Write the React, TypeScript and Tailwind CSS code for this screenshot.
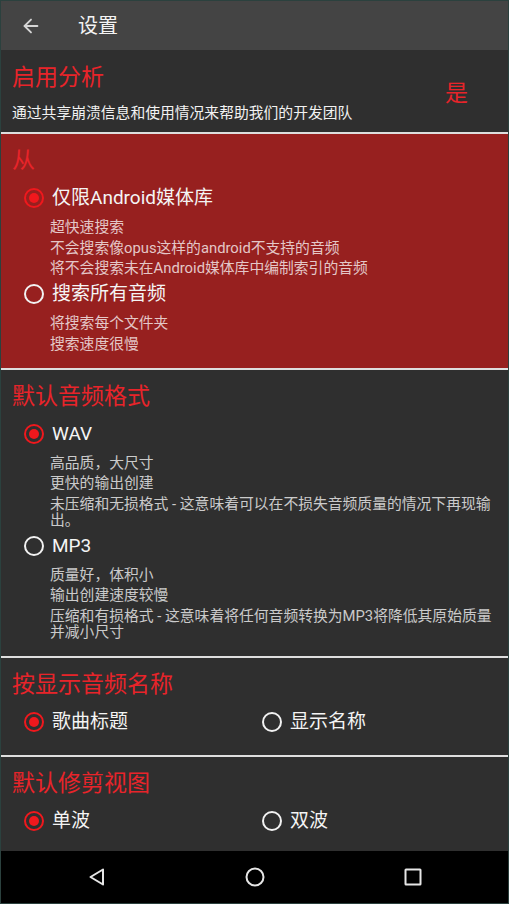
import { ArrowLeft } from 'lucide-react'

type Option = { label: string; checked: boolean; desc?: string[] }

const sourceOptions: Option[] = [
  {
    label: '仅限Android媒体库',
    checked: true,
    desc: ['超快速搜索', '不会搜索像opus这样的android不支持的音频', '将不会搜索未在Android媒体库中编制索引的音频'],
  },
  { label: '搜索所有音频', checked: false, desc: ['将搜索每个文件夹', '搜索速度很慢'] },
]

const formatOptions: Option[] = [
  {
    label: 'WAV',
    checked: true,
    desc: ['高品质，大尺寸', '更快的输出创建', '未压缩和无损格式 - 这意味着可以在不损失音频质量的情况下再现输出。'],
  },
  {
    label: 'MP3',
    checked: false,
    desc: ['质量好，体积小', '输出创建速度较慢', '压缩和有损格式 - 这意味着将任何音频转换为MP3将降低其原始质量并减小尺寸'],
  },
]

function Radio({ checked }: { checked: boolean }) {
  return (
    <span
      className={`flex h-5 w-5 shrink-0 items-center justify-center rounded-full border-2 ${
        checked ? 'border-[#f0181d]' : 'border-[#f2f2f2]'
      }`}
    >
      {checked && <span className="h-[10px] w-[10px] rounded-full bg-[#f0181d]" />}
    </span>
  )
}

function RadioRow({ label, checked }: { label: string; checked: boolean }) {
  return (
    <div className="flex h-[28px] items-center gap-2">
      <Radio checked={checked} />
      <span className="text-[19px] leading-[28px] text-[#f4f4f4]">{label}</span>
    </div>
  )
}

function Divider() {
  return <div className="h-[2px] shrink-0 bg-[#dedede]" />
}

function SectionTitle({ children }: { children: string }) {
  return <div className="text-[23px] leading-[30px] text-[#e8242a]">{children}</div>
}

function StackSection({ title, options, className = '' }: { title: string; options: Option[]; className?: string }) {
  return (
    <section className={`pb-[16px] pt-[12px] ${className}`}>
      <div className="px-[11px]">
        <SectionTitle>{title}</SectionTitle>
      </div>
      <div className="mt-[8px] flex flex-col gap-[4px] pl-[23px] pr-[8px]">
        {options.map((o) => (
          <div key={o.label}>
            <RadioRow label={o.label} checked={o.checked} />
            <div className="ml-[26px] mt-[7px] flex flex-col gap-[4.5px]">
              {o.desc?.map((d) => (
                <p key={d} className="text-[14.8px] leading-[16px] text-white/75">
                  {d}
                </p>
              ))}
            </div>
          </div>
        ))}
      </div>
    </section>
  )
}

function PairSection({ title, left, right }: { title: string; left: Option; right: Option }) {
  return (
    <section className="shrink-0 pb-[19px] pt-[12px]">
      <div className="px-[11px]">
        <SectionTitle>{title}</SectionTitle>
      </div>
      <div className="mt-[8px] flex pl-[23px]">
        <div className="w-[238px]">
          <RadioRow label={left.label} checked={left.checked} />
        </div>
        <RadioRow label={right.label} checked={right.checked} />
      </div>
    </section>
  )
}

export default function App() {
  return (
    <div className="flex h-[904px] w-[509px] flex-col overflow-hidden border border-[#2b413e] bg-[#2f2f2f] font-['Roboto','Noto_Sans_CJK_SC',sans-serif]">
      {/* toolbar */}
      <header className="flex h-[49px] shrink-0 items-center bg-[#444444]">
        <ArrowLeft size={22} strokeWidth={2} className="ml-[19px] text-[#d6d6d6]" />
        <div className="ml-[36px] text-[20px] text-[#f4f4f4]">设置</div>
      </header>

      <main className="min-h-0 flex-1 overflow-hidden">
        <section className="flex h-[82px] items-start justify-between pl-[11px] pr-[40px] pt-[13px]">
          <div>
            <SectionTitle>启用分析</SectionTitle>
            <div className="mt-[10px] text-[14.8px] leading-[20px] text-[#f2f2f2]">
              通过共享崩溃信息和使用情况来帮助我们的开发团队
            </div>
          </div>
          <div className="mt-[16px] text-[23px] leading-[30px] text-[#e8242a]">是</div>
        </section>
        <Divider />

        <StackSection title="从" options={sourceOptions} className="bg-[#97201f]" />
        <Divider />

        <StackSection title="默认音频格式" options={formatOptions} />
        <Divider />

        <PairSection
          title="按显示音频名称"
          left={{ label: '歌曲标题', checked: true }}
          right={{ label: '显示名称', checked: false }}
        />
        <Divider />

        <PairSection
          title="默认修剪视图"
          left={{ label: '单波', checked: true }}
          right={{ label: '双波', checked: false }}
        />
      </main>

      {/* nav bar */}
      <nav className="flex h-[52px] shrink-0 items-center justify-center bg-black">
        <div className="flex w-[158px] justify-center">
          <svg width="20" height="20" viewBox="0 0 20 20" fill="none" stroke="#e6e6e6" strokeWidth="2" strokeLinejoin="round">
            <path d="M16 2.5 L3.5 10 L16 17.5 Z" />
          </svg>
        </div>
        <div className="flex w-[158px] justify-center">
          <svg width="20" height="20" viewBox="0 0 20 20" fill="none" stroke="#e6e6e6" strokeWidth="2">
            <circle cx="10" cy="10" r="8.5" />
          </svg>
        </div>
        <div className="flex w-[158px] justify-center">
          <svg width="20" height="20" viewBox="0 0 20 20" fill="none" stroke="#e6e6e6" strokeWidth="2">
            <rect x="2.5" y="2.5" width="15" height="15" rx="0.5" />
          </svg>
        </div>
      </nav>
    </div>
  )
}
